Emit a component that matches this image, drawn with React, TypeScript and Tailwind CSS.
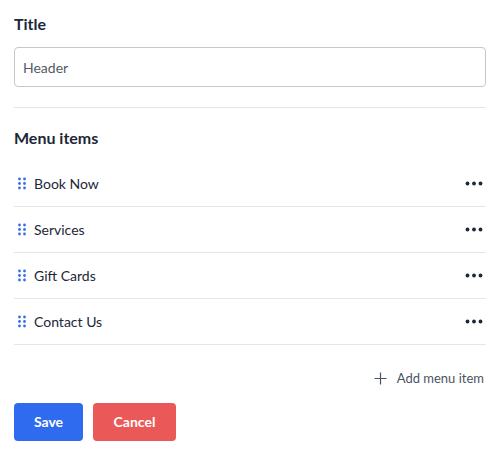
import React from 'react';

const items = ['Book Now', 'Services', 'Gift Cards', 'Contact Us'];

const DragHandle = () => (
    <svg width="10" height="13" viewBox="0 0 10 13" className="shrink-0">
        {[2, 6.5, 11].map((y) =>
            [2.5, 7.5].map((x) => <circle key={`${x}-${y}`} cx={x} cy={y} r="1.4" fill="#3a6ee8" />)
        )}
    </svg>
);

const Ellipsis = () => (
    <svg width="18" height="5" viewBox="0 0 18 5">
        <circle cx="2.5" cy="2.5" r="1.9" fill="#1c2738" />
        <circle cx="9" cy="2.5" r="1.9" fill="#1c2738" />
        <circle cx="15.5" cy="2.5" r="1.9" fill="#1c2738" />
    </svg>
);

const App = () => {
    return (
        <div className="w-[500px] h-[457px] bg-white px-[14px] pt-3 font-['Lato','Liberation_Sans',sans-serif] text-[#1c2738]">
            <h2 className="text-base leading-6 font-bold">Title</h2>
            <input
                defaultValue="Header"
                className="mt-[11px] w-full h-10 px-[8px] rounded-[4px] border border-[#c3c8ce] text-sm text-[#525b66] outline-none"
            />
            <div className="mt-5 border-t border-[#e4e6e9]" />

            <h2 className="mt-[18px] text-base leading-6 font-bold">Menu items</h2>
            <ul className="mt-[11px]">
                {items.map((item) => (
                    <li key={item} className="h-[46px] flex items-center border-b border-[#e4e6e9]">
                        <span className="pl-[3px]">
                            <DragHandle />
                        </span>
                        <span className="ml-[7px] text-sm text-[#1c2738]">{item}</span>
                        <span className="ml-auto mr-[3px]">
                            <Ellipsis />
                        </span>
                    </li>
                ))}
            </ul>

            <div className="mt-[23px] flex justify-end">
                <button className="mr-[2px] flex items-center gap-[10px] text-[13px] leading-5 text-[#4b5563]">
                    <svg width="13" height="13" viewBox="0 0 13 13">
                        <path d="M6.5 0.5v12M0.5 6.5h12" stroke="#4b5563" strokeWidth="1.2" />
                    </svg>
                    Add menu item
                </button>
            </div>

            <div className="mt-[15px] flex gap-[10px]">
                <button className="h-[38px] w-[69px] rounded-[4px] bg-[#2f6bef] text-white text-sm font-bold">Save</button>
                <button className="h-[38px] w-[83px] rounded-[4px] bg-[#eb5858] text-white text-sm font-bold">Cancel</button>
            </div>
        </div>
    );
};

export default App;
